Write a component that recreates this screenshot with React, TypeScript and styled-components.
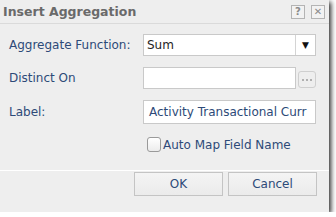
import React from "react";
import styled, { createGlobalStyle } from "styled-components";

const GlobalStyle = createGlobalStyle`
  html, body {
    margin: 0;
    padding: 0;
    background: #ffffff;
  }
  body {
    font-family: "DejaVu Sans", "Liberation Sans", sans-serif;
    font-size: 12px;
  }
`;

const Dialog = styled.div`
  width: 329px;
  height: 212px;
  background: #eeeeee;
  box-shadow: 2px 2px 5px rgba(0, 0, 0, 0.85);
  display: flex;
  flex-direction: column;
  box-sizing: border-box;
`;

const TitleBar = styled.div`
  height: 23px;
  display: flex;
  align-items: center;
  justify-content: space-between;
  padding: 0 4px 0 3px;
  border-bottom: 1px solid #dadada;
`;

const Title = styled.div`
  font-weight: bold;
  font-size: 12.5px;
  color: #6a6a6a;
`;

const TitleTools = styled.div`
  display: flex;
  gap: 6px;
`;

const ToolButton = styled.div`
  width: 12px;
  height: 12px;
  border: 1px solid #b4b4b4;
  background: #f2f2f2;
  display: flex;
  align-items: center;
  justify-content: center;
  color: #8a8a8a;
  font-size: 10px;
  font-weight: bold;
  line-height: 1;
`;

const Body = styled.div`
  padding: 10px 13px 0 9px;
  display: flex;
  flex-direction: column;
  gap: 11px;
  border-bottom: 1px solid #ffffff;
  height: 147px;
  box-sizing: border-box;
`;

const Row = styled.div`
  display: grid;
  grid-template-columns: 134px 1fr;
  align-items: center;
`;

const Label = styled.div`
  color: #2d4a78;
`;

const Select = styled.div`
  height: 22px;
  box-sizing: border-box;
  border: 1px solid #c9c9c9;
  background: #ffffff;
  display: flex;
`;

const SelectValue = styled.div`
  flex: 1;
  padding-left: 3px;
  display: flex;
  align-items: center;
  color: #1e1e1e;
`;

const SelectArrow = styled.div`
  width: 19px;
  border-left: 1px solid #d4d4d4;
  display: flex;
  align-items: center;
  justify-content: center;
  color: #111;
  font-size: 9px;
`;

const FieldWithButton = styled.div`
  display: flex;
  align-items: center;
  gap: 2px;
`;

const TextBox = styled.div<{ $height?: number }>`
  flex: 1;
  height: ${(p) => p.$height ?? 22}px;
  box-sizing: border-box;
  border: 1px solid #c9c9c9;
  background: #ffffff;
  padding-left: 5px;
  display: flex;
  align-items: center;
  color: #2d4a78;
  white-space: nowrap;
  overflow: hidden;
`;

const MoreButton = styled.div`
  width: 18px;
  height: 17px;
  box-sizing: border-box;
  border: 1px solid #cfcfcf;
  border-radius: 3px;
  background: #eeeeee;
  display: flex;
  align-items: center;
  justify-content: center;
  margin-top: 3px;
`;

const CheckRow = styled.label`
  display: flex;
  align-items: center;
  gap: 2px;
  margin-left: 138px;
  margin-top: 2px;
  color: #2d4a78;
`;

const CheckBox = styled.span`
  width: 14px;
  height: 15px;
  box-sizing: border-box;
  border: 1px solid #9a9a9a;
  border-radius: 3px;
  background: linear-gradient(#ffffff, #ececec);
`;

const Footer = styled.div`
  display: flex;
  justify-content: flex-end;
  gap: 5px;
  padding: 1px 12px 0 0;
`;

const Button = styled.div`
  width: 89px;
  height: 24px;
  box-sizing: border-box;
  border: 1px solid #c4c4c4;
  background: linear-gradient(#f4f4f4, #ebebeb);
  display: flex;
  align-items: center;
  justify-content: center;
  color: #2d4a78;
`;

const Dots = () => (
  <svg width="10" height="2" viewBox="0 0 10 2">
    <rect x="0" y="0" width="2" height="2" fill="#b0b0b0" />
    <rect x="4" y="0" width="2" height="2" fill="#b0b0b0" />
    <rect x="8" y="0" width="2" height="2" fill="#b0b0b0" />
  </svg>
);

export default function App() {
  return (
    <>
      <GlobalStyle />
      <Dialog>
        <TitleBar>
          <Title>Insert Aggregation</Title>
          <TitleTools>
            <ToolButton>?</ToolButton>
            <ToolButton>✕</ToolButton>
          </TitleTools>
        </TitleBar>
        <Body>
          <Row>
            <Label>Aggregate Function:</Label>
            <Select>
              <SelectValue>Sum</SelectValue>
              <SelectArrow>▼</SelectArrow>
            </Select>
          </Row>
          <Row>
            <Label>Distinct On</Label>
            <FieldWithButton>
              <TextBox />
              <MoreButton>
                <Dots />
              </MoreButton>
            </FieldWithButton>
          </Row>
          <Row>
            <Label>Label:</Label>
            <TextBox $height={24}>Activity Transactional Curr</TextBox>
          </Row>
          <CheckRow>
            <CheckBox />
            Auto Map Field Name
          </CheckRow>
        </Body>
        <Footer>
          <Button>OK</Button>
          <Button>Cancel</Button>
        </Footer>
      </Dialog>
    </>
  );
}
